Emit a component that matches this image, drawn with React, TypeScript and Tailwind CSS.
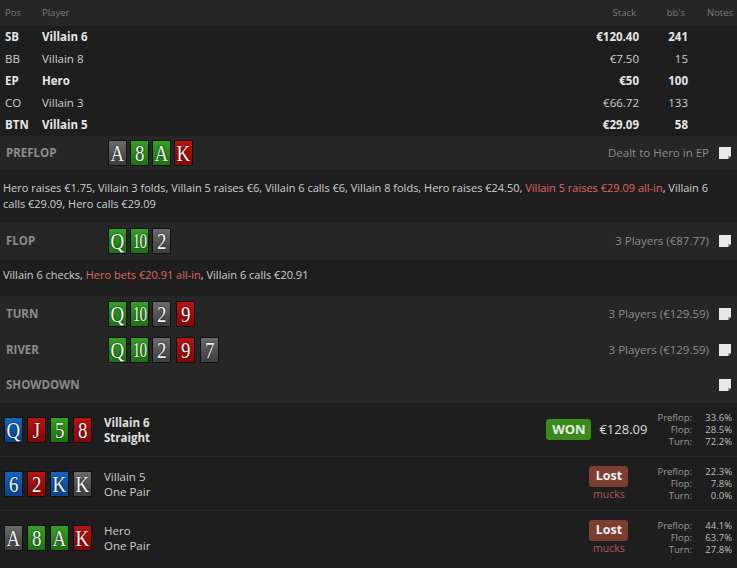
import React from "react";

type C = "g" | "G" | "r" | "b";

const cardBg: Record<C, string> = {
  g: "bg-gradient-to-b from-[#6a6a6a] to-[#3f3f3f]",
  G: "bg-gradient-to-b from-[#35a023] to-[#1d7410]",
  r: "bg-gradient-to-b from-[#b81414] to-[#850808]",
  b: "bg-gradient-to-b from-[#1466c4] to-[#0a4588]",
};

function Card({ v, c, className = "" }: { v: string; c: C; className?: string }) {
  const ten = v === "10";
  return (
    <div
      className={`w-[19px] h-[26px] border border-[#111] rounded-[1px] flex items-center justify-center text-[#f4f4f4] overflow-hidden ${cardBg[c]} ${className}`}
      style={{ fontFamily: '"Liberation Serif", "DejaVu Serif", serif', textShadow: "0 0 2px rgba(0,0,0,0.9)" }}
    >
      <span
        className={
          ten
            ? "inline-block text-[21px] leading-none tracking-[-1px] scale-x-[0.72] mt-[1px]"
            : "inline-block text-[23px] leading-none scale-x-[0.82] mt-[1px]"
        }
      >
        {v}
      </span>
    </div>
  );
}

function Note() {
  return (
    <svg width="14" height="14" viewBox="0 0 14 14" className="shrink-0">
      <path d="M1 1 H13 V10 L10 13 H1 Z" fill="#e8e8e8" />
      <path d="M13 10 L10 10 L10 13 Z" fill="#9a9a9a" />
    </svg>
  );
}

function SectionHeader({ label, cards, right, h = "h-[36px]" }: { label: string; cards?: React.ReactNode; right?: string; h?: string }) {
  return (
    <div className={`flex items-center ${h} bg-[#262626]`}>
      <div className="w-[108px] pl-[6px] font-bold text-[11.5px] text-[#8c8c8c]">{label}</div>
      <div className="flex items-center">{cards}</div>
      <div className="flex-1" />
      {right && <div className="text-[11.5px] text-[#8c8c8c] mr-[9px]">{right}</div>}
      <div className="mr-[5px]">
        <Note />
      </div>
    </div>
  );
}

const players = [
  { pos: "SB", name: "Villain 6", stack: "€120.40", bb: "241", bold: true },
  { pos: "BB", name: "Villain 8", stack: "€7.50", bb: "15", bold: false },
  { pos: "EP", name: "Hero", stack: "€50", bb: "100", bold: true },
  { pos: "CO", name: "Villain 3", stack: "€66.72", bb: "133", bold: false },
  { pos: "BTN", name: "Villain 5", stack: "€29.09", bb: "58", bold: true },
];

function Stats({ p, f, t }: { p: string; f: string; t: string }) {
  return (
    <div className="grid grid-cols-[auto_40px] text-[9.5px] leading-[12px] mr-[5px]">
      <div className="text-right text-[#9a9a9a]">Preflop:</div>
      <div className="text-right text-[#bdbdbd]">{p}</div>
      <div className="text-right text-[#9a9a9a]">Flop:</div>
      <div className="text-right text-[#bdbdbd]">{f}</div>
      <div className="text-right text-[#9a9a9a]">Turn:</div>
      <div className="text-right text-[#bdbdbd]">{t}</div>
    </div>
  );
}

function ShowRow({
  cards,
  name,
  hand,
  bold,
  won,
  stats,
}: {
  cards: [string, C][];
  name: string;
  hand: string;
  bold?: boolean;
  won?: boolean;
  stats: [string, string, string];
}) {
  return (
    <div className="flex items-center h-[54px] bg-[#1e1e1e] border-t border-[#262626]">
      <div className="flex gap-[4px] pl-[4px] w-[104px]">
        {cards.map(([v, c], i) => (
          <Card key={i} v={v} c={c} />
        ))}
      </div>
      <div className={`text-[11.5px] leading-[15px] ${bold ? "font-bold text-[#e0e0e0]" : "text-[#cfcfcf]"}`}>
        <div>{name}</div>
        <div>{hand}</div>
      </div>
      <div className="flex-1" />
      {won ? (
        <>
          <div className="h-[21px] w-[45px] rounded-[3px] bg-[#3b8a1c] flex items-center justify-center text-[13px] font-bold text-[#e8e8e8]">WON</div>
          <div className="ml-[8px] mr-[10px] text-[13px] text-[#dedede]">€128.09</div>
        </>
      ) : (
        <div className="flex flex-col items-center mr-[29px]">
          <div className="h-[21px] w-[39px] rounded-[3px] bg-[#7b3e31] flex items-center justify-center text-[12.5px] font-bold text-[#eeeeee]">Lost</div>
          <div className="text-[10.5px] leading-[14px] text-[#b05858]">mucks</div>
        </div>
      )}
      <Stats p={stats[0]} f={stats[1]} t={stats[2]} />
    </div>
  );
}

export default function App() {
  return (
    <div
      className="w-[737px] h-[568px] bg-[#1e1e1e] overflow-hidden text-[#cfcfcf]"
      style={{ fontFamily: '"Open Sans", "Noto Sans", sans-serif' }}
    >
      {/* table header */}
      <div className="flex items-center h-[26px] bg-[#262626] text-[9.5px] text-[#7a7a7a]">
        <div className="w-[42px] pl-[5px]">Pos</div>
        <div className="flex-1">Player</div>
        <div className="w-[80px] text-right pr-[4px]">Stack</div>
        <div className="w-[48px] text-right pr-[3px]">bb's</div>
        <div className="w-[49px] pl-[19px]">Notes</div>
      </div>
      {players.map((p) => (
        <div key={p.pos} className={`flex items-center h-[22px] text-[11.5px] ${p.bold ? "font-bold text-[#e6e6e6]" : "text-[#cfcfcf]"}`}>
          <div className="w-[42px] pl-[5px]">{p.pos}</div>
          <div className="flex-1">{p.name}</div>
          <div className="w-[80px] text-right pr-[1px]">{p.stack}</div>
          <div className="w-[48px] text-right">{p.bb}</div>
          <div className="w-[49px]" />
        </div>
      ))}

      <SectionHeader
        label="PREFLOP"
        h="h-[34px]"
        right="Dealt to Hero in EP"
        cards={
          <div className="flex gap-[3px]">
            <Card v="A" c="g" />
            <Card v="8" c="G" />
            <Card v="A" c="G" />
            <Card v="K" c="r" />
          </div>
        }
      />
      <div className="pl-[3px] pr-[16px] py-[10px] text-[11px] leading-[16px] text-[#cfcfcf]">
        Hero raises €1.75, Villain 3 folds, Villain 5 raises €6, Villain 6 calls €6, Villain 8 folds, Hero raises €24.50,{" "}
        <span className="text-[#e06666]">Villain 5 raises €29.09 all-in</span>, Villain{"\u00a0"}6 calls €29.09, Hero calls €29.09
      </div>

      <SectionHeader
        label="FLOP"
        h="h-[38px]"
        right="3 Players (€87.77)"
        cards={
          <div className="flex gap-[3px]">
            <Card v="Q" c="G" />
            <Card v="10" c="G" />
            <Card v="2" c="g" />
          </div>
        }
      />
      <div className="px-[3px] pt-[7px] pb-[13px] text-[11px] leading-[16px] text-[#cfcfcf]">
        Villain 6 checks, <span className="text-[#e06666]">Hero bets €20.91 all-in</span>, Villain 6 calls €20.91
      </div>

      <SectionHeader
        label="TURN"
        right="3 Players (€129.59)"
        cards={
          <div className="flex gap-[3px]">
            <Card v="Q" c="G" />
            <Card v="10" c="G" />
            <Card v="2" c="g" />
            <Card v="9" c="r" className="ml-[2px]" />
          </div>
        }
      />
      <SectionHeader
        label="RIVER"
        right="3 Players (€129.59)"
        cards={
          <div className="flex gap-[3px]">
            <Card v="Q" c="G" />
            <Card v="10" c="G" />
            <Card v="2" c="g" />
            <Card v="9" c="r" className="ml-[2px]" />
            <Card v="7" c="g" className="ml-[2px]" />
          </div>
        }
      />
      <SectionHeader label="SHOWDOWN" h="h-[34px]" />

      <ShowRow
        cards={[["Q", "b"], ["J", "r"], ["5", "G"], ["8", "r"]]}
        name="Villain 6"
        hand="Straight"
        bold
        won
        stats={["33.6%", "28.5%", "72.2%"]}
      />
      <ShowRow
        cards={[["6", "b"], ["2", "r"], ["K", "b"], ["K", "g"]]}
        name="Villain 5"
        hand="One Pair"
        stats={["22.3%", "7.8%", "0.0%"]}
      />
      <ShowRow
        cards={[["A", "g"], ["8", "G"], ["A", "G"], ["K", "r"]]}
        name="Hero"
        hand="One Pair"
        stats={["44.1%", "63.7%", "27.8%"]}
      />
    </div>
  );
}
